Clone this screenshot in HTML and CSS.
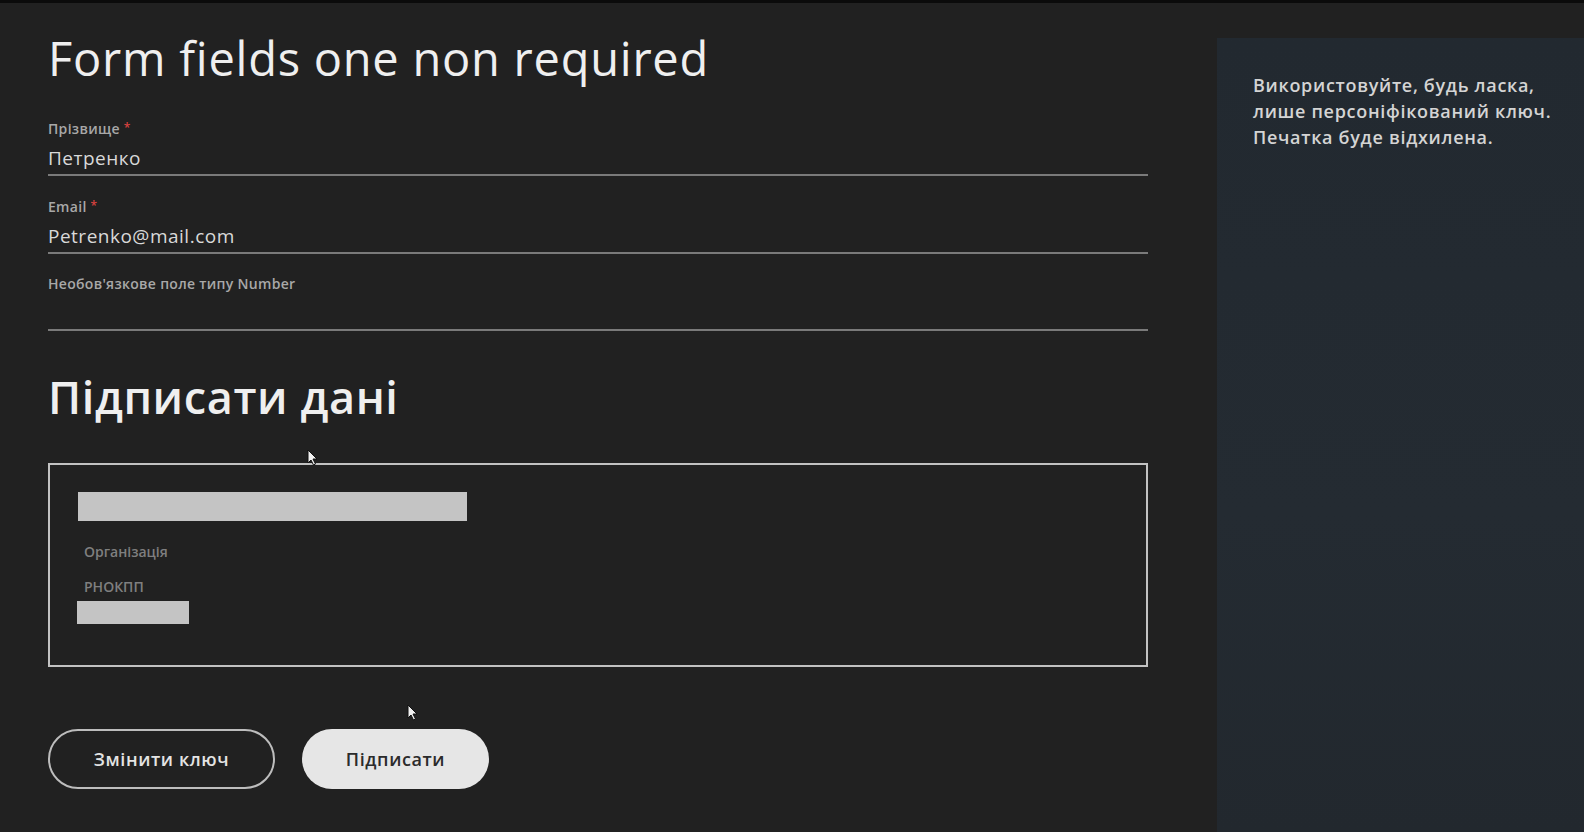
FILE: index.html
```html
<!DOCTYPE html>
<html lang="uk">
<head>
<meta charset="utf-8">
<title>Form fields one non required</title>
<link rel="stylesheet" href="styles.css">
</head>
<body>
<div class="page">
  <main class="main">
    <h1 class="title">Form fields one non required</h1>

    <div class="field">
      <div class="label">Прізвище <span class="req">*</span></div>
      <div class="value">Петренко</div>
    </div>
    <div class="field">
      <div class="label">Email <span class="req">*</span></div>
      <div class="value">Petrenko@mail.com</div>
    </div>
    <div class="field">
      <div class="label">Необов'язкове поле типу Number</div>
      <div class="value"></div>
    </div>

    <h2 class="subtitle">Підписати дані</h2>

    <div class="keybox">
      <div class="bar bar-wide"></div>
      <div class="meta meta-org">Організація</div>
      <div class="meta meta-id">РНОКПП</div>
      <div class="bar bar-short"></div>
    </div>

    <div class="actions">
      <button class="btn btn-outline">Змінити ключ</button>
      <button class="btn btn-fill">Підписати</button>
    </div>

    <svg class="cursor cursor-a" width="11" height="17" viewBox="0 0 11 17"><path d="M1 1 L1 14 L4 11 L6.5 16 L8.5 15 L6 10 L10 10 Z" fill="#f2f2f2" stroke="#111" stroke-width="1"/></svg>
    <svg class="cursor cursor-b" width="11" height="17" viewBox="0 0 11 17"><path d="M1 1 L1 14 L4 11 L6.5 16 L8.5 15 L6 10 L10 10 Z" fill="#f2f2f2" stroke="#111" stroke-width="1"/></svg>
  </main>

  <aside class="aside">
    <p class="note">Використовуйте, будь ласка,<br>лише персоніфікований ключ.<br>Печатка буде відхилена.</p>
  </aside>
</div>
</body>
</html>
```

FILE: styles.css
```css
* { box-sizing: border-box; }
html, body {
  margin: 0;
  padding: 0;
  height: 100%;
}
body {
  background: #212121;
  color: #e6e6e6;
  font-family: "Open Sans", "Liberation Sans", sans-serif;
  border-top: 3px solid #0b0b0b;
  overflow: hidden;
}
.page {
  display: flex;
  height: 829px;
}
.main {
  position: relative;
  width: 1217px;
  flex: 0 0 1217px;
  padding: 26px 69px 0 48px;
}
.title {
  margin: 0;
  font-size: 47px;
  line-height: 58px;
  font-weight: 500;
  color: #efefef;
  letter-spacing: 0.75px;
}
.field {
  margin-top: 21px;
}
.title + .field { margin-top: 32px; }
.label {
  font-size: 14px;
  line-height: 18px;
  font-weight: 600;
  color: #a8a8a8;
  letter-spacing: 0.3px;
}
.req {
  color: #d8413f;
  font-size: 12px;
  vertical-align: 2px;
}
.value {
  margin-top: 7px;
  height: 31px;
  padding-bottom: 3px;
  font-size: 19px;
  line-height: 26px;
  color: #d9d9d9;
  letter-spacing: 0.5px;
  border-bottom: 2px solid #7a7a7a;
}
.subtitle {
  margin: 39px 0 0;
  font-size: 45px;
  line-height: 54px;
  font-weight: 600;
  color: #efefef;
  letter-spacing: 0.6px;
}
.keybox {
  margin-top: 39px;
  height: 204px;
  border: 2px solid #c2c2c2;
  padding: 27px 28px 0 28px;
}
.bar {
  background: #c4c4c4;
}
.bar-wide {
  width: 389px;
  height: 29px;
}
.bar-short {
  width: 112px;
  height: 23px;
  margin-top: 5px;
  margin-left: -1px;
}
.meta {
  margin-left: 6px;
  font-size: 14px;
  line-height: 18px;
  font-weight: 600;
  color: #7f7f7f;
}
.meta-org { margin-top: 22px; }
.meta-id { margin-top: 17px; }
.actions {
  display: flex;
  gap: 27px;
  margin-top: 62px;
}
.btn {
  height: 60px;
  border-radius: 30px;
  font-family: "Open Sans", "Liberation Sans", sans-serif;
  font-size: 18px;
  font-weight: 600;
  letter-spacing: 0.6px;
  cursor: pointer;
}
.btn-outline {
  width: 227px;
  background: transparent;
  border: 2px solid #bdbdbd;
  color: #e4e4e4;
}
.btn-fill {
  width: 187px;
  background: #e6e6e6;
  border: none;
  color: #2b2b2b;
}
.cursor {
  position: absolute;
}
.cursor-a { left: 307px; top: 446px; }
.cursor-b { left: 407px; top: 701px; }
.aside {
  flex: 1;
  margin-top: 35px;
  background: linear-gradient(180deg, #222930 0%, #242b32 60%, #22282e 100%);
  padding: 34px 20px 0 36px;
}
.note {
  margin: 0;
  font-size: 18px;
  line-height: 26px;
  font-weight: 600;
  color: #d4d4d4;
  letter-spacing: 0.7px;
  white-space: nowrap;
}
```
